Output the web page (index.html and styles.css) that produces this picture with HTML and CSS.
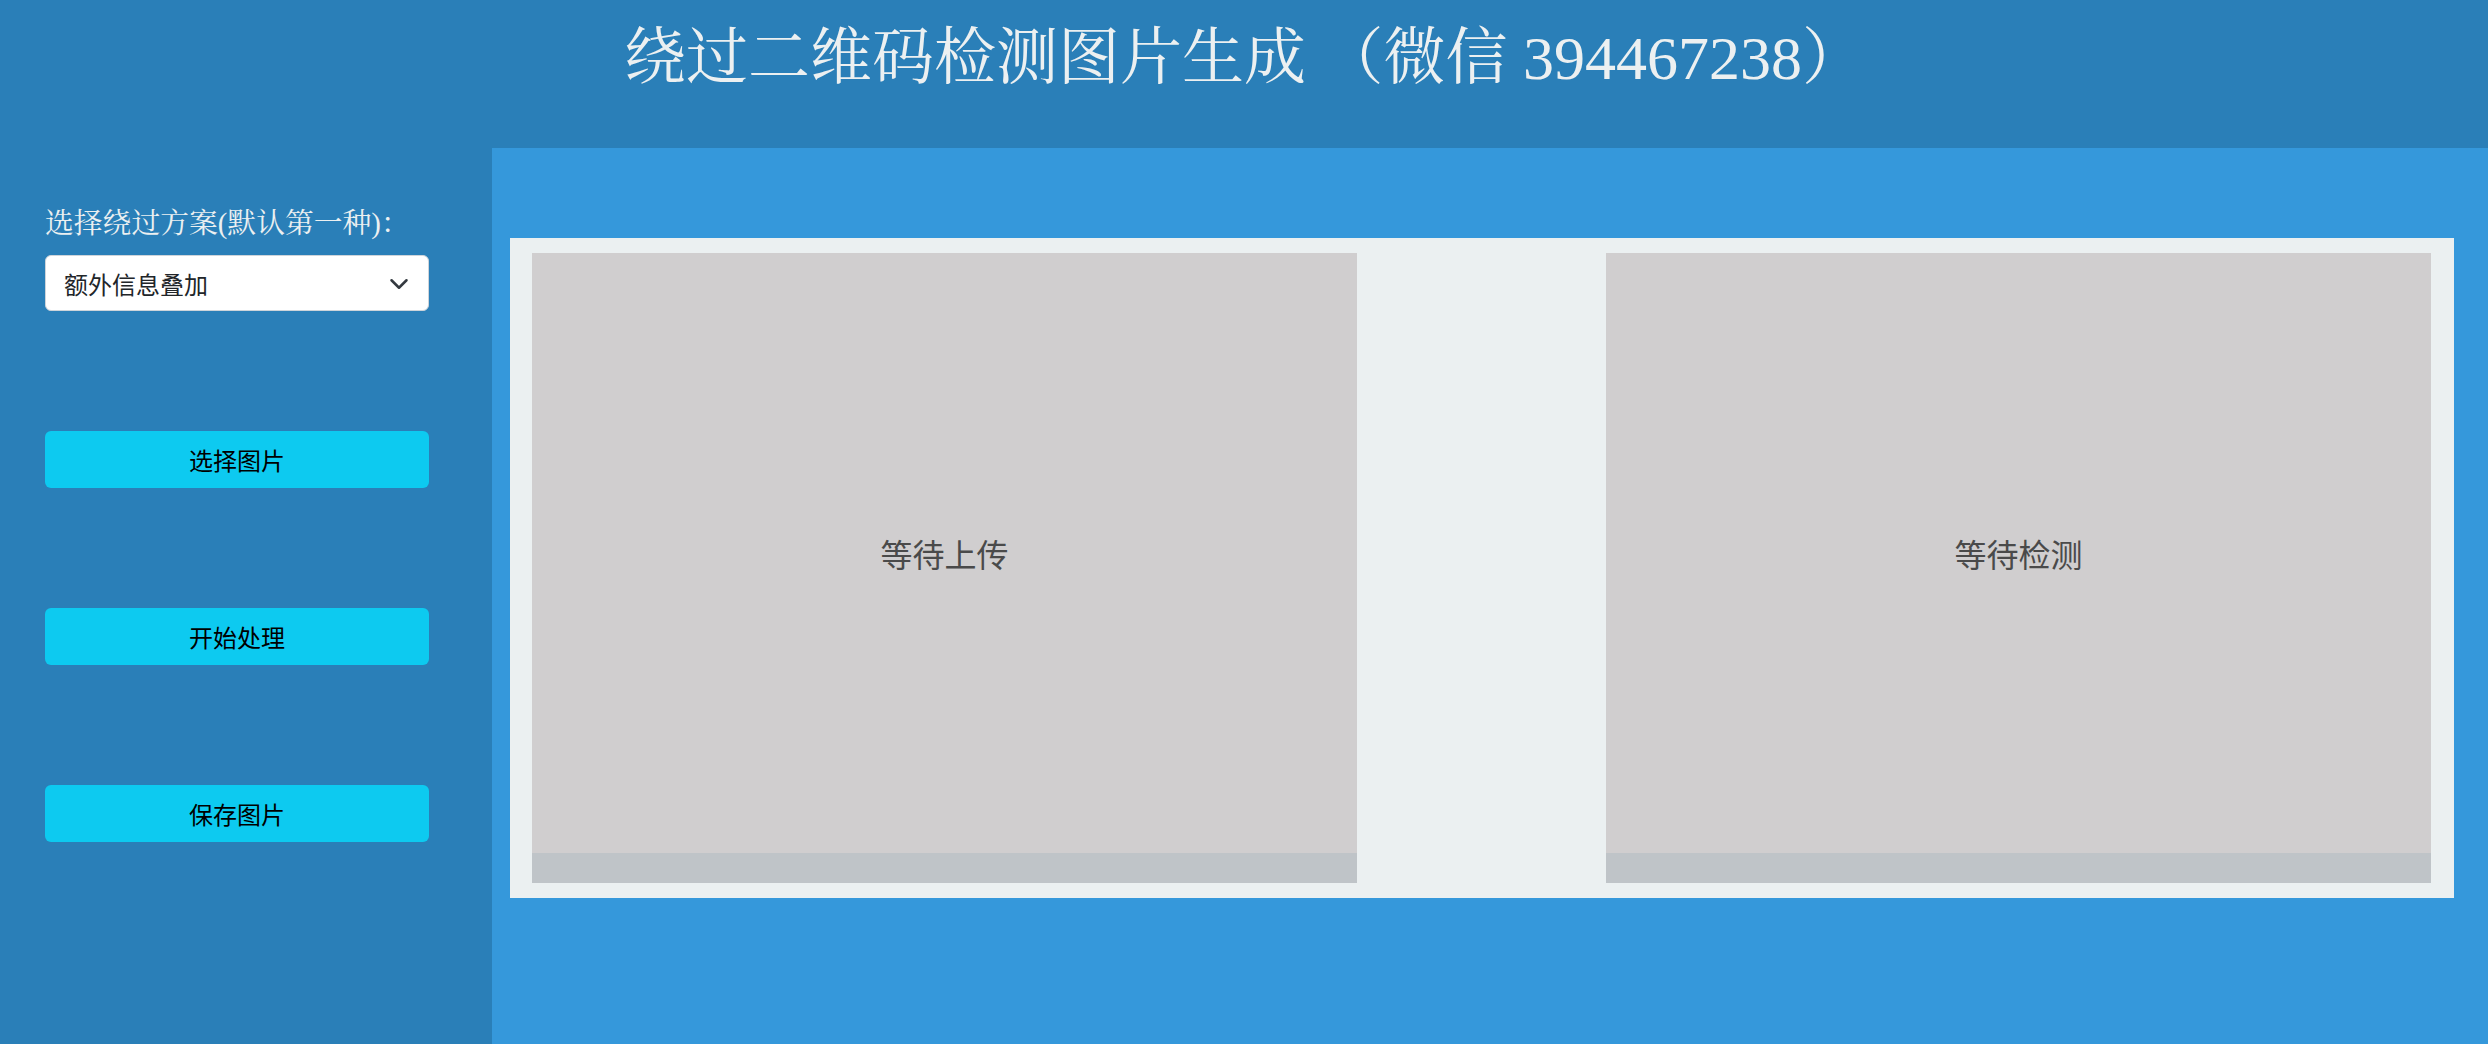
FILE: index.html
```html
<!DOCTYPE html>
<html lang="zh-CN">
<head>
<meta charset="utf-8">
<title>绕过二维码检测图片生成</title>
<link rel="stylesheet" href="styles.css">
</head>
<body>
<div class="app">
  <header class="topbar">
    <h1 class="title">绕过二维码检测图片生成 （微信 394467238）</h1>
  </header>
  <aside class="sidebar">
    <label class="field-label" for="scheme">选择绕过方案(默认第一种)：</label>
    <div class="select-wrap">
      <select id="scheme" class="select">
        <option>额外信息叠加</option>
      </select>
      <svg class="chevron" viewBox="0 0 16 16" aria-hidden="true"><path d="M2 5l6 6 6-6" fill="none" stroke="#343a40" stroke-width="2" stroke-linecap="round" stroke-linejoin="round"/></svg>
    </div>
    <button class="btn">选择图片</button>
    <button class="btn">开始处理</button>
    <button class="btn">保存图片</button>
  </aside>
  <main class="main">
    <section class="panel">
      <div class="imgbox">
        <div class="imgbox-area">等待上传</div>
        <div class="imgbox-bar"></div>
      </div>
      <div class="imgbox">
        <div class="imgbox-area">等待检测</div>
        <div class="imgbox-bar"></div>
      </div>
    </section>
  </main>
</div>
</body>
</html>
```

FILE: styles.css
```css
html, body {
  margin: 0;
  padding: 0;
  height: 100%;
}
body {
  font-family: "Noto Sans CJK SC", "Noto Sans", sans-serif;
  background: #3598db;
}
.app {
  display: grid;
  grid-template-columns: 492px 1fr;
  grid-template-rows: 148px 1fr;
  min-height: 100vh;
}
.topbar {
  grid-column: 1 / 3;
  background: #2a7fb8;
  display: flex;
  justify-content: center;
  align-items: flex-start;
}
.title {
  margin: 0;
  padding-top: 27px;
  font-family: "Liberation Serif", "Noto Serif CJK SC", "Noto Sans CJK SC", serif;
  font-weight: normal;
  font-size: 62px;
  line-height: 1;
  color: #ecf0f1;
  white-space: pre;
}
.sidebar {
  background: #2a7fb8;
  padding: 54px 63px 0 45px;
  display: flex;
  flex-direction: column;
}
.field-label {
  font-family: "Liberation Serif", "Noto Serif CJK SC", "Noto Sans CJK SC", serif;
  font-size: 28.8px;
  line-height: 1.5;
  color: #ecf0f1;
  margin-bottom: 10px;
}
.select-wrap {
  position: relative;
  height: 56px;
  margin-bottom: 120px;
}
.select {
  appearance: none;
  -webkit-appearance: none;
  width: 100%;
  height: 56px;
  box-sizing: border-box;
  border: 1.5px solid #ced4da;
  border-radius: 6px;
  background: #fff;
  padding: 0 54px 0 18px;
  font-family: "Noto Sans CJK SC", sans-serif;
  font-size: 24px;
  color: #212529;
  outline: none;
}
.chevron {
  position: absolute;
  right: 20px;
  top: 19px;
  width: 20px;
  height: 20px;
  pointer-events: none;
}
.btn {
  height: 57px;
  border: none;
  border-radius: 6px;
  background: #0dcaf0;
  color: #000;
  font-family: "Noto Sans CJK SC", sans-serif;
  font-size: 24px;
  margin-bottom: 120px;
  padding: 0;
  cursor: pointer;
}
.btn:last-child {
  margin-bottom: 0;
}
.main {
  background: #3598db;
  padding: 90px 34px 0 18px;
}
.panel {
  background: #ebf0f1;
  box-sizing: border-box;
  width: 1944px;
  height: 660px;
  padding: 15px 23px 15px 22px;
  display: flex;
  justify-content: space-between;
}
.imgbox {
  width: 825px;
  height: 630px;
  display: flex;
  flex-direction: column;
}
.imgbox-area {
  flex: 1;
  background: #d0cecf;
  display: flex;
  align-items: center;
  justify-content: center;
  font-size: 32px;
  color: #4a4a4a;
}
.imgbox-bar {
  height: 30px;
  background: #bfc4c8;
}
```
